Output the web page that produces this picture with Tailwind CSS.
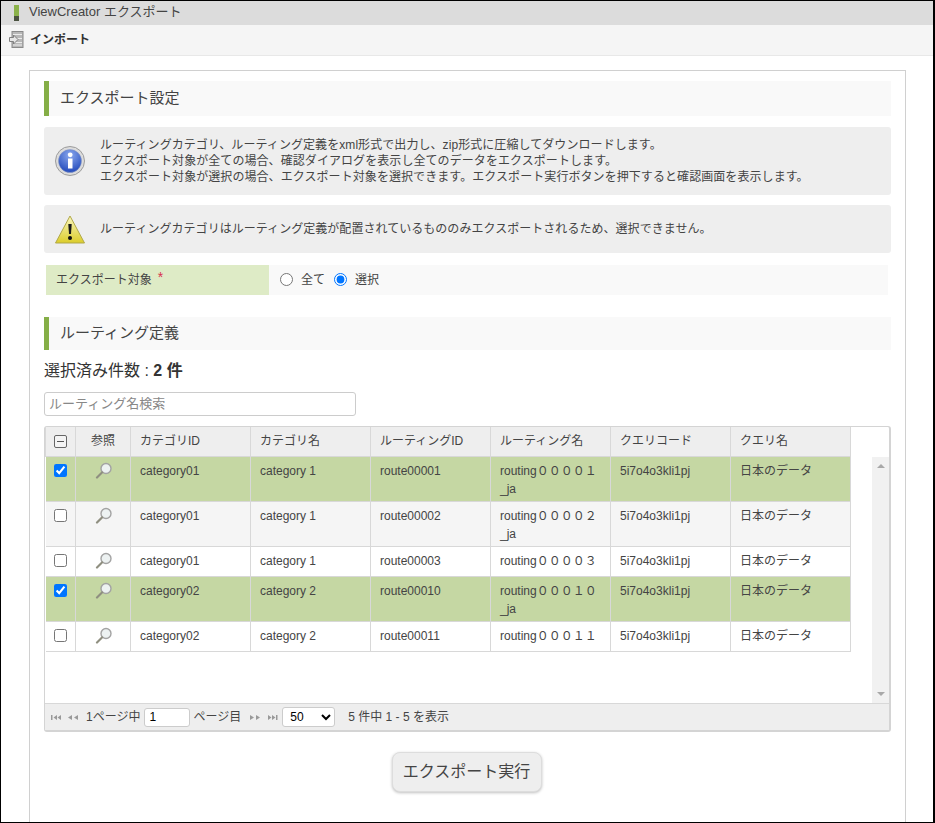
<!DOCTYPE html>
<html lang="ja">
<head>
<meta charset="UTF-8">
<title>ViewCreator エクスポート</title>
<script src="https://cdn.jsdelivr.net/npm/@tailwindcss/browser@4"></script>
</head>
<body class="bg-white">
<div class="h-[823px] overflow-hidden border border-black border-r-2 font-['Liberation_Sans','Noto_Sans_CJK_JP',sans-serif] text-[12px] text-[#444]">
  <!-- title -->
  <div class="h-6 bg-[#dcdcdc] flex items-center pl-[13px] gap-[10px] text-[13px] text-[#444]">
    <div class="w-[5px] h-[16px] flex flex-col"><div class="h-[11px] bg-[#8bb24a]"></div><div class="h-[5px] bg-[#4a5240]"></div></div>
    <span class="-mt-[3px]">ViewCreator エクスポート</span>
  </div>
  <!-- toolbar -->
  <div class="h-[31px] bg-[#f5f5f5] border-b border-[#e8e8e8] flex items-center pl-[8px] pb-[1px] gap-[6px] text-[12px] font-bold text-[#333]">
    <svg width="15" height="17" viewBox="0 0 15 17">
      <rect x="3" y="0.500" width="11" height="16" fill="#b8b8b8" stroke="#8a8a8a"/>
      <path d="M4 3.500h9M4 7.500h9M4 11.500h9M4 14h9" stroke="#ececec"/>
      <path d="M0.500 6.500h4v-2.500l4.500 4.500-4.500 4.500v-2.500h-4z" fill="#e6e6e6" stroke="#808080"/>
    </svg>
    <span>インポート</span>
  </div>
  <!-- panel -->
  <div class="mx-[28px] mt-[14px] border border-[#d0d0d0] border-b-0 px-[14px] pt-[10px] h-[760px] w-[877px]">
    <div class="h-[35px] bg-[#f9f9f9] border-l-[5px] border-[#85ae47] flex items-center pl-[11px] text-[15px]">エクスポート設定</div>

    <div class="mt-[11px] h-[68px] bg-[#eeeeee] rounded-[3px] flex items-center pl-[11px] gap-[15px] leading-[16px] tracking-[0.07px]">
      <svg width="30" height="30" viewBox="0 0 30 30" class="shrink-0">
        <defs><radialGradient id="ib" cx="0.500" cy="0.250" r="0.800"><stop offset="0" stop-color="#8aa8ee"/><stop offset="1" stop-color="#1c44b8"/></radialGradient></defs>
        <circle cx="15" cy="15" r="14.500" fill="#dcdcdc" stroke="#9c9c9c"/><circle cx="15" cy="15" r="11.500" fill="url(#ib)" stroke="#8d9bc0" stroke-width="0.500"/>
        <rect x="13" y="12.500" width="4.500" height="10" fill="#fff"/><circle cx="15.200" cy="8.800" r="2.400" fill="#fff"/>
      </svg>
      <div>ルーティングカテゴリ、ルーティング定義をxml形式で出力し、zip形式に圧縮してダウンロードします。<br>エクスポート対象が全ての場合、確認ダイアログを表示し全てのデータをエクスポートします。<br>エクスポート対象が選択の場合、エクスポート対象を選択できます。エクスポート実行ボタンを押下すると確認画面を表示します。</div>
    </div>

    <div class="mt-[10px] h-[48px] bg-[#eeeeee] rounded-[3px] flex items-center pl-[11px] gap-[15px] tracking-[0.04px]">
      <svg width="30" height="29" viewBox="0 0 30 29" class="shrink-0">
        <defs><linearGradient id="wb" x1="0" y1="0" x2="0" y2="1"><stop offset="0" stop-color="#faf7c0"/><stop offset="1" stop-color="#dccd2a"/></linearGradient></defs>
        <path d="M15 1 L29.500 28 H0.500 Z" fill="url(#wb)" stroke="#b0a848" stroke-linejoin="round"/>
        <path d="M13.300 9h3.400l-0.700 10h-2z" fill="#1a1a1a"/><circle cx="15" cy="23" r="2" fill="#111"/>
      </svg>
      <div>ルーティングカテゴリはルーティング定義が配置されているもののみエクスポートされるため、選択できません。</div>
    </div>

    <div class="mt-[12px] ml-[2px] mr-[3px] h-[30px] flex bg-[#f9f9f9]">
      <div class="w-[223px] bg-[#deebc6] flex items-center pl-[10px] pb-[1px]">エクスポート対象<span class="ml-[6px] text-[14px] text-[#d9304f] -mt-1">*</span></div>
      <div class="flex items-center pl-[11px] pb-[1px]">
        <input type="radio" name="t" class="w-[13px] h-[13px] m-0 accent-[#0075ff]"><span class="ml-[8px]">全て</span>
        <input type="radio" name="t" checked class="w-[13px] h-[13px] ml-[9px] accent-[#0075ff]"><span class="ml-[8px]">選択</span>
      </div>
    </div>

    <div class="mt-[22px] h-[33px] bg-[#f9f9f9] border-l-[5px] border-[#85ae47] flex items-center pl-[11px] text-[15px]">ルーティング定義</div>

    <div class="mt-[11px] text-[16px] leading-[20px] text-[#333]">選択済み件数 : <b>2 件</b></div>

    <input type="text" placeholder="ルーティング名検索" class="block mt-[11px] w-[312px] h-[24px] border border-[#ccc] rounded-[3px] px-[4px] pb-[2px] text-[13px] placeholder:text-[#888] outline-none">

    <!-- grid -->
    <div class="mt-[10px] w-[847px] border border-[#d4d4d4] rounded-[3px] border-b-[2px] border-r-[2px]">
      <div class="flex items-start h-[276px] overflow-hidden">
        <table class="w-[805px] table-fixed border-collapse text-[12px]">
          <colgroup><col class="w-[30px]"><col class="w-[55px]"><col class="w-[120px]"><col class="w-[120px]"><col class="w-[120px]"><col class="w-[120px]"><col class="w-[120px]"><col class="w-[120px]"></colgroup>
          <thead>
            <tr class="h-[29px] bg-[#eeeeee] [&>th]:border [&>th]:border-[#d8d8d8] [&>th]:border-t-0 [&>th]:font-normal [&>th]:text-left [&>th]:pl-[9px]">
              <th class="border-l-0 !pl-[8px]"><span class="flex w-[13px] h-[13px] border border-[#666] rounded-[2px] items-center justify-center bg-[#f4f4f4]"><span class="w-[7px] h-[1.500px] bg-[#555]"></span></span></th>
              <th class="!text-center !pl-0">参照</th>
              <th>カテゴリID</th>
              <th>カテゴリ名</th>
              <th>ルーティングID</th>
              <th>ルーティング名</th>
              <th>クエリコード</th>
              <th>クエリ名</th>
            </tr>
          </thead>
          <tbody class="[&_td]:border [&_td]:border-[#d8d8d8] [&_td]:align-top [&_td]:pl-[9px] [&_td]:pt-[5px] [&_td]:leading-[18px] [&_td:first-child]:border-l-0 [&_td:first-child]:pl-[8px] [&_td:nth-child(2)]:pl-0">
            <tr class="h-[45px] bg-[#c5d7a3]">
              <td><input type="checkbox" checked class="block w-[13px] h-[13px] m-0 mt-[2px] accent-[#0075ff]"></td>
              <td><svg class="mx-auto" width="17" height="17" viewBox="0 0 17 17"><circle cx="11" cy="6.500" r="5" fill="#edf2f2" stroke="#a3a3a3" stroke-width="1.400"/><path d="M7 10.500 L2 15.500" stroke="#8f8f80" stroke-width="2.200" stroke-linecap="round"/></svg></td>
              <td>category01</td><td>category 1</td><td>route00001</td><td>routing００００１<br>_ja</td><td>5i7o4o3kli1pj</td><td>日本のデータ</td>
            </tr>
            <tr class="h-[45px] bg-[#f5f5f5]">
              <td><input type="checkbox" class="block w-[13px] h-[13px] m-0 mt-[2px]"></td>
              <td><svg class="mx-auto" width="17" height="17" viewBox="0 0 17 17"><circle cx="11" cy="6.500" r="5" fill="#edf2f2" stroke="#a3a3a3" stroke-width="1.400"/><path d="M7 10.500 L2 15.500" stroke="#8f8f80" stroke-width="2.200" stroke-linecap="round"/></svg></td>
              <td>category01</td><td>category 1</td><td>route00002</td><td>routing００００２<br>_ja</td><td>5i7o4o3kli1pj</td><td>日本のデータ</td>
            </tr>
            <tr class="h-[30px] bg-white">
              <td><input type="checkbox" class="block w-[13px] h-[13px] m-0 mt-[2px]"></td>
              <td><svg class="mx-auto" width="17" height="17" viewBox="0 0 17 17"><circle cx="11" cy="6.500" r="5" fill="#edf2f2" stroke="#a3a3a3" stroke-width="1.400"/><path d="M7 10.500 L2 15.500" stroke="#8f8f80" stroke-width="2.200" stroke-linecap="round"/></svg></td>
              <td>category01</td><td>category 1</td><td>route00003</td><td>routing００００３</td><td>5i7o4o3kli1pj</td><td>日本のデータ</td>
            </tr>
            <tr class="h-[45px] bg-[#c5d7a3]">
              <td><input type="checkbox" checked class="block w-[13px] h-[13px] m-0 mt-[2px] accent-[#0075ff]"></td>
              <td><svg class="mx-auto" width="17" height="17" viewBox="0 0 17 17"><circle cx="11" cy="6.500" r="5" fill="#edf2f2" stroke="#a3a3a3" stroke-width="1.400"/><path d="M7 10.500 L2 15.500" stroke="#8f8f80" stroke-width="2.200" stroke-linecap="round"/></svg></td>
              <td>category02</td><td>category 2</td><td>route00010</td><td>routing０００１０<br>_ja</td><td>5i7o4o3kli1pj</td><td>日本のデータ</td>
            </tr>
            <tr class="h-[30px] bg-white">
              <td><input type="checkbox" class="block w-[13px] h-[13px] m-0 mt-[2px]"></td>
              <td><svg class="mx-auto" width="17" height="17" viewBox="0 0 17 17"><circle cx="11" cy="6.500" r="5" fill="#edf2f2" stroke="#a3a3a3" stroke-width="1.400"/><path d="M7 10.500 L2 15.500" stroke="#8f8f80" stroke-width="2.200" stroke-linecap="round"/></svg></td>
              <td>category02</td><td>category 2</td><td>route00011</td><td>routing０００１１</td><td>5i7o4o3kli1pj</td><td>日本のデータ</td>
            </tr>
          </tbody>
        </table>
        <!-- scrollbar -->
        <div class="ml-[21px] mt-[30px] w-[17px] h-[246px] bg-[#f1f1f1] flex flex-col justify-between items-center py-[7px]">
          <span class="w-0 h-0 border-x-[4px] border-x-transparent border-b-[4px] border-b-[#a8a8a8]"></span>
          <span class="w-0 h-0 border-x-[4px] border-x-transparent border-t-[4px] border-t-[#a8a8a8]"></span>
        </div>
      </div>
      <!-- pager -->
      <div class="h-[27px] bg-[#eeeeee] border-t border-[#d8d8d8] flex items-center pl-[6px] text-[12px]">
        <svg width="10" height="7" viewBox="0 0 10 7" fill="#999"><rect x="0" y="1" width="1.500" height="5"/><path d="M6 1v5L2.500 3.500zM10 1v5L6.500 3.500z"/></svg>
        <svg class="ml-[6px]" width="12" height="7" viewBox="0 0 12 7" fill="#999"><path d="M5 1v5L1 3.500zM11 1v5L7 3.500z"/></svg>
        <span class="ml-[7px]">1ページ中</span>
        <input type="text" value="1" class="ml-[4px] w-[46px] h-[19px] border border-[#ccc] rounded-[3px] bg-white px-[4px] text-[12px] text-black outline-none">
        <span class="ml-[3px]">ページ目</span>
        <svg class="ml-[8px]" width="12" height="7" viewBox="0 0 12 7" fill="#999"><path d="M1 1v5l4-2.500zM7 1v5l4-2.500z"/></svg>
        <svg class="ml-[7px]" width="10" height="7" viewBox="0 0 10 7" fill="#999"><path d="M0 1v5l3.500-2.500zM4 1v5l3.500-2.500z"/><rect x="8" y="1" width="1.500" height="5"/></svg>
        <select class="ml-[4px] w-[53px] h-[20px] border border-[#ccc] rounded-[3px] bg-white pl-[3px] text-[12px] text-black"><option>50</option></select>
        <span class="ml-[13px]">5 件中 1 - 5 を表示</span>
      </div>
    </div>

    <div class="mt-[20px] pr-[2px] flex justify-center">
      <button class="w-[150px] h-[40px] bg-[#eeeeee] border border-[#ddd] rounded-[8px] shadow-[0_1px_3px_rgba(0,0,0,0.25)] text-[16px]">エクスポート実行</button>
    </div>
  </div>
</div>
</body>
</html>
